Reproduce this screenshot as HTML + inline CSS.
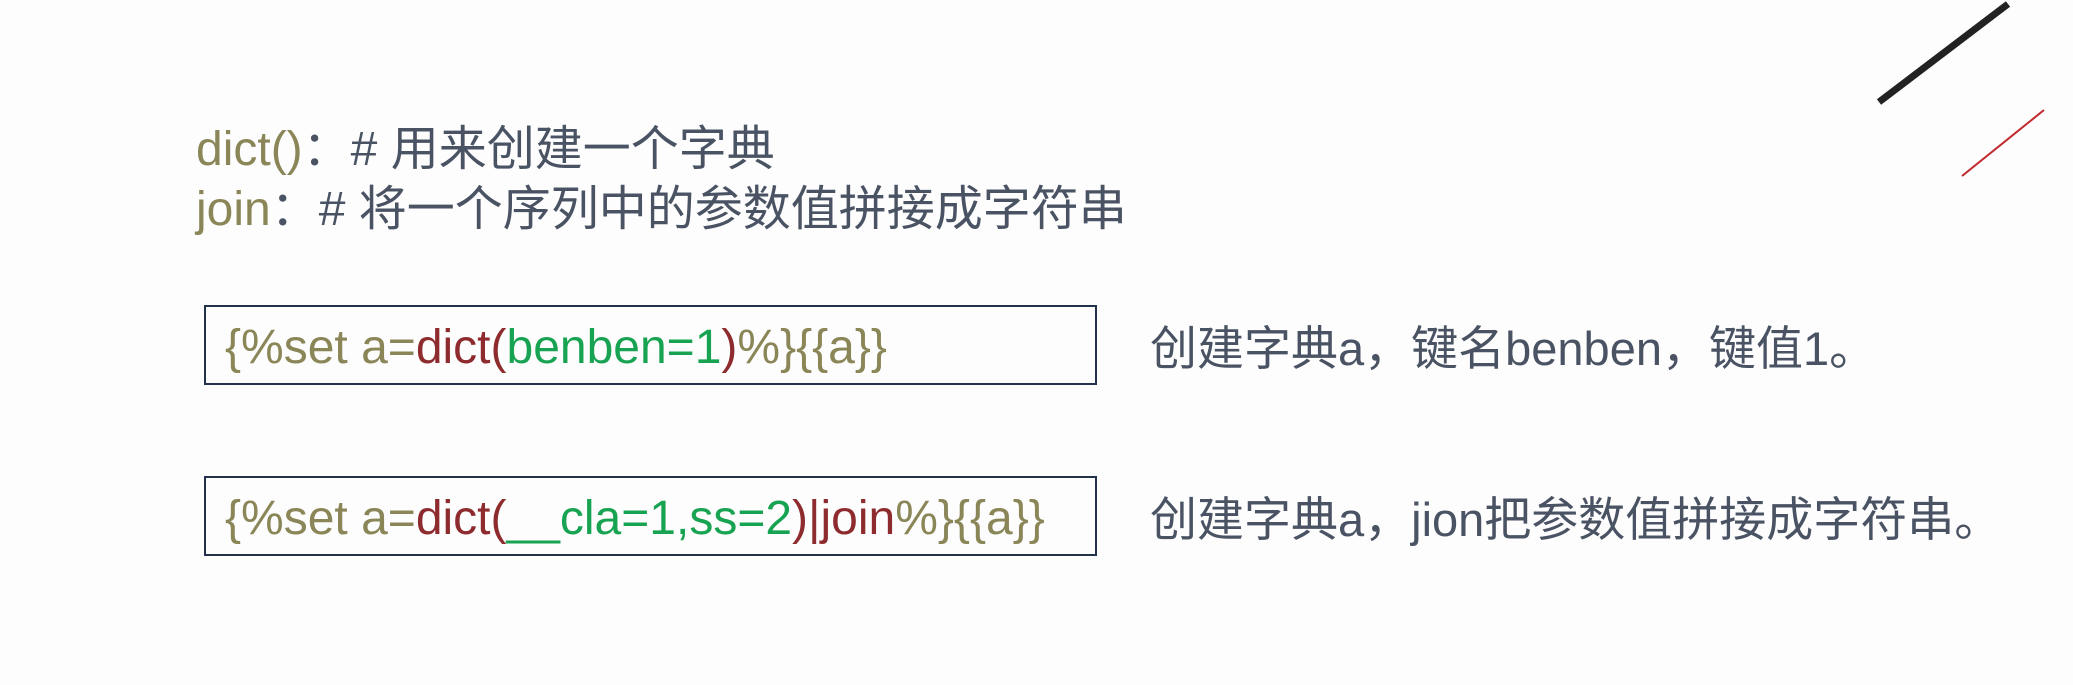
<!DOCTYPE html>
<html><head><meta charset="utf-8"><style>
html,body{margin:0;padding:0;background:#fdfdfd;width:2073px;height:685px;overflow:hidden;position:relative;font-family:"Liberation Sans","Noto Sans CJK SC",sans-serif;}
.t{position:absolute;white-space:nowrap;font-size:48px;line-height:1;}
.o{color:#8a8658}.r{color:#8e2b2e}.g{color:#17a352}.k{color:#4a5363}
.box{position:absolute;left:204px;width:889px;height:76px;border:2px solid #22324b;}
</style></head><body>
<svg style="position:absolute;left:0;top:0" width="2073" height="685">
<line x1="1879" y1="102" x2="2008" y2="4" stroke="#222" stroke-width="7"/>
<line x1="1962" y1="176" x2="2044" y2="110" stroke="#c0282c" stroke-width="2"/>
</svg>
<div class="t" style="left:196px;top:126px"><span class="o">dict()</span><span class="k">：# 用来创建一个字典</span></div>
<div class="t" style="left:196px;top:186px"><span class="o">join</span><span class="k">：# 将一个序列中的参数值拼接成字符串</span></div>
<div class="box" style="top:305px"></div>
<div class="t" style="left:225px;top:324px"><span class="o">{%set a=</span><span class="r">dict(</span><span class="g">benben=1</span><span class="r">)</span><span class="o">%}{{a}}</span></div>
<div class="t k" style="left:1150px;top:325px;font-size:47px">创建字典a，键名benben，键值1。</div>
<div class="box" style="top:476px"></div>
<div class="t" style="left:225px;top:495px"><span class="o">{%set a=</span><span class="r">dict(</span><span class="g">__cla=1,ss=2</span><span class="r">)|join</span><span class="o">%}{{a}}</span></div>
<div class="t k" style="left:1150px;top:496px;font-size:47px">创建字典a，jion把参数值拼接成字符串。</div>
</body></html>
